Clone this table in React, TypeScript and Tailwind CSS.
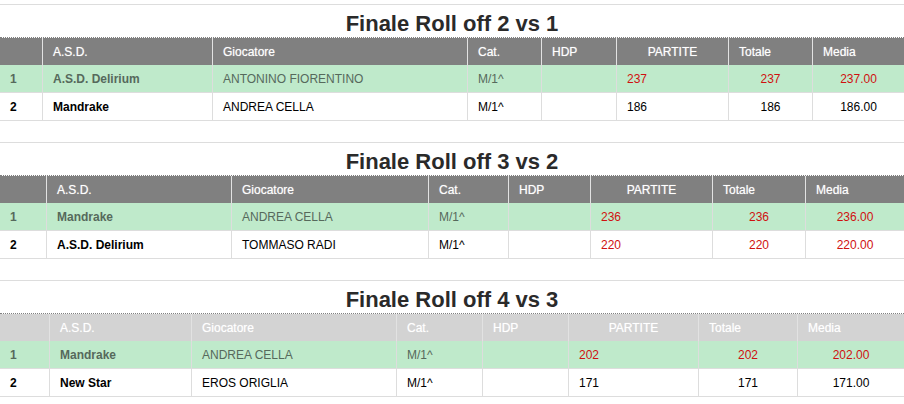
import React from "react";

type Row = {
  pos: string;
  asd: string;
  player: string;
  cat: string;
  hdp: string;
  partite: string;
  totale: string;
  media: string;
  red: boolean;
};

type Block = {
  title: string;
  cols: string;
  head: string;
  rows: Row[];
};

const blocks: Block[] = [
  {
    title: "Finale Roll off 2 vs 1",
    cols: "grid-cols-[43px_170px_255px_74px_75px_112px_84px_1fr]",
    head: "bg-[#808080]",
    rows: [
      { pos: "1", asd: "A.S.D. Delirium", player: "ANTONINO FIORENTINO", cat: "M/1^", hdp: "", partite: "237", totale: "237", media: "237.00", red: true },
      { pos: "2", asd: "Mandrake", player: "ANDREA CELLA", cat: "M/1^", hdp: "", partite: "186", totale: "186", media: "186.00", red: false },
    ],
  },
  {
    title: "Finale Roll off 3 vs 2",
    cols: "grid-cols-[47px_185px_197px_80px_82px_122px_93px_1fr]",
    head: "bg-[#808080]",
    rows: [
      { pos: "1", asd: "Mandrake", player: "ANDREA CELLA", cat: "M/1^", hdp: "", partite: "236", totale: "236", media: "236.00", red: true },
      { pos: "2", asd: "A.S.D. Delirium", player: "TOMMASO RADI", cat: "M/1^", hdp: "", partite: "220", totale: "220", media: "220.00", red: true },
    ],
  },
  {
    title: "Finale Roll off 4 vs 3",
    cols: "grid-cols-[50px_142px_205px_86px_86px_130px_99px_1fr]",
    head: "bg-[#d3d3d3]",
    rows: [
      { pos: "1", asd: "Mandrake", player: "ANDREA CELLA", cat: "M/1^", hdp: "", partite: "202", totale: "202", media: "202.00", red: true },
      { pos: "2", asd: "New Star", player: "EROS ORIGLIA", cat: "M/1^", hdp: "", partite: "171", totale: "171", media: "171.00", red: false },
    ],
  },
];

const headers = ["", "A.S.D.", "Giocatore", "Cat.", "HDP", "PARTITE", "Totale", "Media"];

function Table({ block }: { block: Block }) {
  return (
    <div className="grid text-[12px]">
      <div className={`grid ${block.cols} h-[28px] border-t border-dotted border-[#808080] bg-clip-padding ${block.head} text-white [text-shadow:0_0_1px_rgba(255,255,255,0.6)]`}>
        {headers.map((h, i) => (
          <div
            key={i}
            className={`flex items-center px-[10px] ${i < 7 ? "border-r border-[#e2e2e2]" : ""} ${i === 5 ? "justify-center" : ""}`}
          >
            {h}
          </div>
        ))}
      </div>
      {block.rows.map((r, ri) => {
        const win = ri === 0;
        const base = win ? "text-[#56695c]" : "text-black";
        const num = r.red ? "text-[#d01010]" : base;
        const cells = [r.pos, r.asd, r.player, r.cat, r.hdp, r.partite, r.totale, r.media];
        return (
          <div key={ri} className={`grid ${block.cols} h-[28px] border-b border-[#dddddd] ${win ? "bg-[#bfeacb]" : "bg-white"}`}>
            {cells.map((c, i) => (
              <div
                key={i}
                className={`flex items-center px-[10px] ${i < 7 ? "border-r border-[#dddddd]" : ""} ${i >= 5 ? num : base} ${i <= 1 ? "font-bold" : ""} ${i >= 6 ? "justify-center" : ""}`}
              >
                {c}
              </div>
            ))}
          </div>
        );
      })}
    </div>
  );
}

export default function App() {
  return (
    <main className="min-h-screen w-[904px] bg-white pt-[4px] font-['Liberation_Sans',Arial,sans-serif]">
      {blocks.map((b, i) => (
        <section key={i} className={`border-t border-[#dddddd] ${i > 0 ? "mt-[21px]" : ""}`}>
          <h2 className="flex h-[32px] items-end justify-center pb-[1px] text-[22px] font-bold leading-[24px] text-[#2a2a2a]">
            {b.title}
          </h2>
          <Table block={b} />
        </section>
      ))}
    </main>
  );
}
